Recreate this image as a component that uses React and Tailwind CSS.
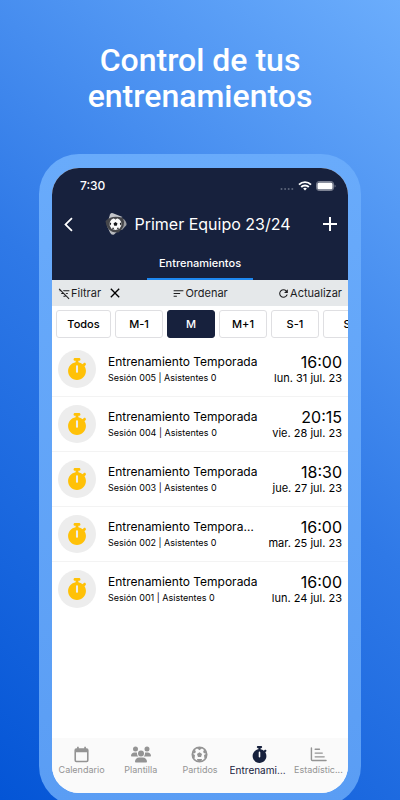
import React, { useState } from "react";
import {
  MdAdd,
  MdArrowBackIosNew,
  MdClose,
  MdFilterListOff,
  MdRefresh,
  MdSort,
} from "react-icons/md";
import { FaStopwatch, FaUsers } from "react-icons/fa6";

const SESSIONS = [
  { id: "005", title: "Entrenamiento Temporada", time: "16:00", date: "lun. 31 jul. 23" },
  { id: "004", title: "Entrenamiento Temporada", time: "20:15", date: "vie. 28 jul. 23" },
  { id: "003", title: "Entrenamiento Temporada", time: "18:30", date: "jue. 27 jul. 23" },
  { id: "002", title: "Entrenamiento Temporada", time: "16:00", date: "mar. 25 jul. 23" },
  { id: "001", title: "Entrenamiento Temporada", time: "16:00", date: "lun. 24 jul. 23" },
];

const PERIODS = ["Todos", "M-1", "M", "M+1", "S-1", "S"];

const CalendarIcon = ({ className }) => (
  <svg viewBox="0 0 18 18" fill="currentColor" className={className} aria-hidden="true">
    <path d="M4.3.8h1.8v1.7h5.8V.8h1.8v1.7h.8a2 2 0 0 1 2 2v10.700a2 2 0 0 1-2 2h-11a2 2 0 0 1-2-2V4.500a2 2 0 0 1 2-2h.8ZM3.200 6.600v8.400c0 .3.2.5.5.5h10.600c.3 0 .5-.2.5-.5V6.600Z" fillRule="evenodd" />
  </svg>
);

const BallIcon = ({ className }) => (
  <svg viewBox="0 0 18 18" fill="currentColor" className={className} aria-hidden="true">
    <circle cx="9" cy="9" r="7.700" fill="none" stroke="currentColor" strokeWidth="1.600" />
    <path d="m9 6.500 2.700 1.900-1.100 3.200H7.400L6.300 8.400Z" />
    <path d="M5.500 1.600h7L9 4.500ZM1.200 8l3 1.500-.4 3.400-1.600.2A8 8 0 0 1 1.200 8ZM16.800 8l-3 1.500.4 3.400 1.600.2a8 8 0 0 0 1-5.100ZM3.200 3.700l1.900 1.500-.5 2.100-2.900 1ZM14.800 3.700l-1.900 1.500.5 2.100 2.900 1ZM6.300 13.700h5.400l-.9 2.900H7.200Z" />
  </svg>
);

const StatsIcon = ({ className }) => (
  <svg
    viewBox="0 0 18 18"
    fill="none"
    stroke="currentColor"
    strokeWidth="1.5"
    strokeLinecap="round"
    className={className}
    aria-hidden="true"
  >
    <path d="M1.500 2v12.300a1 1 0 0 0 1 1H17M5.500 3.500h4.500M5.500 7.500h7.500M5.500 11.500h9.500" />
  </svg>
);

const NAV_ITEMS = [
  { label: "Calendario", icon: CalendarIcon },
  { label: "Plantilla", icon: FaUsers, wide: true },
  { label: "Partidos", icon: BallIcon },
  { label: "Entrenamientos", icon: FaStopwatch },
  { label: "Estadístic...", icon: StatsIcon },
];

const TeamCrest = () => (
  <svg viewBox="0 0 24 24" className="size-6" aria-hidden="true">
    <path d="M6 2.500Q7 .5 9 1.200L18.500 5 12 9 4 9Z" fill="#c4c6ca" />
    <path d="M18 6Q23 9 22.500 13L18 18 14 17Z" fill="#9c9da0" />
    <path d="M3 14 6 20.500Q7.500 23.500 10 22.500L14 19Z" fill="#b9bbbf" />
    <path d="M1.500 9Q8 2.500 19 6Q22.500 14 14.500 20.500Q8 21 4.500 17Q1.500 13 1.500 9Z" fill="#45464a" />
    <circle cx="11.500" cy="12" r="6" fill="#fafafa" />
    <path
      d="m11.500 10 2 1.500-.8 2.300h-2.400l-.8-2.300ZM9.500 6.300h4l-2 1.300ZM5.700 10.500l1.500.4-.6 2.400-.8-.4ZM17.300 10.500l-1.500.4.6 2.400.8-.4ZM8 16.500l1.100-1.200 1.200 2.200ZM15 16.500l-1.100-1.200-1.200 2.200Z"
      fill="#17181b"
    />
  </svg>
);

const StatusBar = () => (
  <div className="flex items-center justify-between pl-7 pr-3 pt-2.5 text-white">
    <span className="text-xs leading-4 font-medium">7:30</span>
    <div className="flex items-center gap-1">
      <svg viewBox="0 0 14 12" className="w-3.5 h-3 text-[#5d657a]" fill="currentColor" aria-hidden="true">
        <circle cx="1.500" cy="9" r="1" />
        <circle cx="5.100" cy="9" r="1" />
        <circle cx="8.700" cy="9" r="1" />
        <circle cx="12.300" cy="9" r="1" />
      </svg>
      <svg viewBox="0 0 14 10" className="w-3.5 h-2.5" fill="none" stroke="currentColor" strokeWidth="1.900" aria-hidden="true">
        <path d="M1 3.600a8.600 8.600 0 0 1 12 0M3.200 6a5.400 5.400 0 0 1 7.600 0" />
        <path d="m7 9.600 1.900-2a2.700 2.700 0 0 0-3.800 0Z" fill="currentColor" stroke="none" />
      </svg>
      <svg viewBox="0 0 20 10" className="w-5 h-2.5" aria-hidden="true">
        <rect x="0.500" y="0.500" width="17" height="9" rx="2.600" fill="none" stroke="#7d8394" />
        <rect x="1.400" y="1.400" width="15.200" height="7.200" rx="1.600" fill="#fff" />
        <path d="M18.600 3.400v3.200q1-.5 1-1.600t-1-1.600" fill="#7d8394" />
      </svg>
    </div>
  </div>
);

const SessionRow = ({ session }) => (
  <li className="flex items-center gap-3 border-b border-[#f3f3f3] px-1.5 py-2 last:border-b-0">
    <span className="flex size-[38px] shrink-0 items-center justify-center rounded-full bg-[#ededed]">
      <FaStopwatch className="size-[22px] text-[#ffc107]" />
    </span>
    <div className="min-w-0 flex-1">
      <p className="truncate text-xs leading-4">{session.title}</p>
      <p className="mt-0.5 text-[9px] leading-3">
        Sesión {session.id} | Asistentes 0
      </p>
    </div>
    <div className="shrink-0 text-right">
      <p className="text-base leading-[18px]">{session.time}</p>
      <p className="text-[11px] leading-3.5">{session.date}</p>
    </div>
  </li>
);

const App = () => {
  const [period, setPeriod] = useState("M");
  const [activeNav, setActiveNav] = useState("Entrenamientos");

  return (
    <main className="flex min-h-screen flex-col overflow-hidden bg-linear-[220deg] from-[#6badfc] via-[#2f79e7] to-[#0455d6] px-[39px] font-[Inter,sans-serif]">
      <h1 className="pt-[42px] text-center font-[Roboto,sans-serif] text-[32px] leading-9 font-medium text-white">
        Control de tus
        <br />
        entrenamientos
      </h1>

      <div className="mt-10 -mb-1.5 flex flex-1 flex-col rounded-[40px] bg-linear-to-b from-[#69abfb] to-[#5a9df4] px-[13px] pt-3.5 pb-[13px]">
        <div className="flex flex-1 flex-col overflow-hidden rounded-[27px] bg-white text-black">
          <header className="bg-[#17213d] text-white">
            <StatusBar />
            <div className="flex items-center justify-between pt-[18px] pr-1.5 pl-2">
              <button type="button" aria-label="Volver">
                <MdArrowBackIosNew className="size-[17px]" />
              </button>
              <div className="flex items-center gap-1.5">
                <TeamCrest />
                <h2 className="text-base leading-6">Primer Equipo 23/24</h2>
              </div>
              <button type="button" aria-label="Añadir">
                <MdAdd className="size-6" />
              </button>
            </div>
            <nav className="mt-3 flex justify-center">
              <a
                href="#entrenamientos"
                className="border-b-2 border-[#1e88f0] px-3 py-[7px] text-[11px] leading-4 font-medium"
              >
                Entrenamientos
              </a>
            </nav>
          </header>

          <div className="flex items-center justify-between bg-[#e5e8ea] px-1.5 text-[11px] leading-[26px] text-[#1c1c1e]">
            <div className="flex items-center gap-1.5">
              <button type="button" className="flex items-center">
                <MdFilterListOff className="size-[13px]" />
                Filtrar
              </button>
              <button type="button" aria-label="Quitar filtro">
                <MdClose className="size-4 text-black" />
              </button>
            </div>
            <button type="button" className="flex items-center">
              <MdSort className="size-[13px]" />
              Ordenar
            </button>
            <button type="button" className="flex items-center">
              <MdRefresh className="size-[13px]" />
              Actualizar
            </button>
          </div>

          <div className="flex gap-1 overflow-hidden px-1 pt-1">
            {PERIODS.map((item) => (
              <button
                key={item}
                type="button"
                onClick={() => setPeriod(item)}
                className={`h-7 shrink-0 rounded-[3px] border text-[11px] font-medium ${
                  item === "Todos" ? "w-[55px]" : "w-12"
                } ${
                  item === period
                    ? "border-[#17213d] bg-[#17213d] text-white"
                    : "border-[#dfdfe2] bg-white"
                }`}
              >
                {item}
              </button>
            ))}
          </div>

          <ul className="mt-1 flex-1">
            {SESSIONS.map((session) => (
              <SessionRow key={session.id} session={session} />
            ))}
          </ul>

          <nav className="grid grid-cols-5 bg-[#fafafa] pt-2 pb-4">
            {NAV_ITEMS.map(({ label, icon: Icon, wide }) => (
              <button
                key={label}
                type="button"
                onClick={() => setActiveNav(label)}
                className={`flex min-w-0 flex-col items-center ${
                  label === activeNav
                    ? "text-[10px] text-[#17213d]"
                    : "text-[9px] text-[#949494]"
                }`}
              >
                <Icon className={wide ? "h-[17px] w-5" : "size-[17px]"} />
                <span className="w-full truncate leading-3.5">{label}</span>
              </button>
            ))}
          </nav>
        </div>
      </div>
    </main>
  );
};

export default App;
